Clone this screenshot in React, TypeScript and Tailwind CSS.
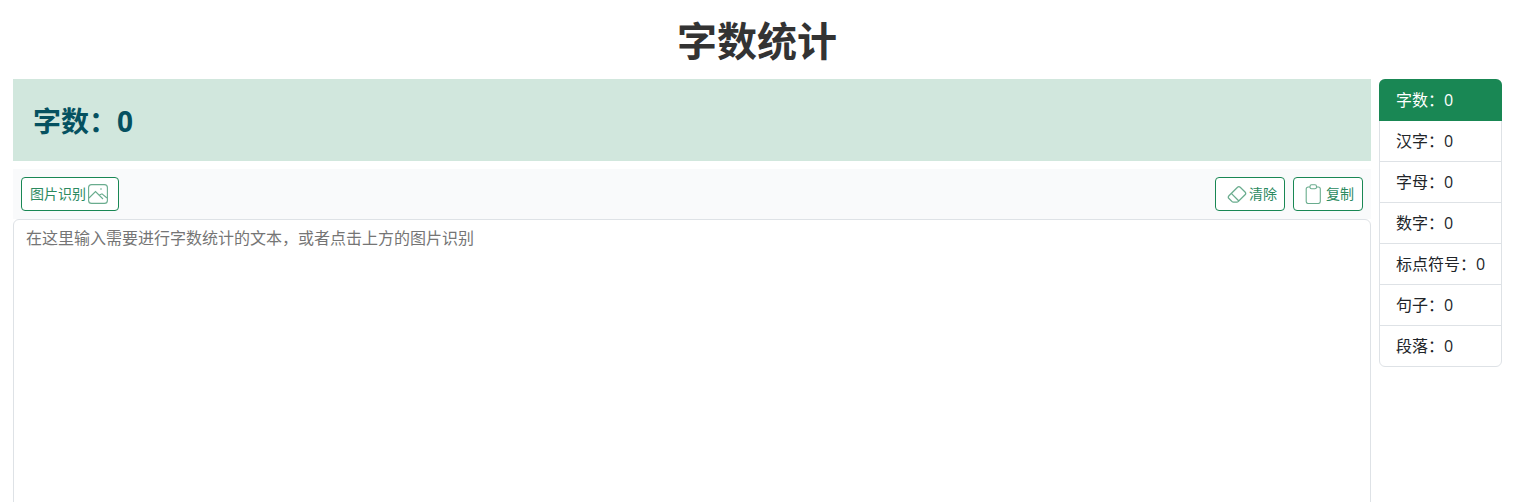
import React from "react";
import { BsEraser } from "react-icons/bs";

const stats = [
  ["字数", "0"],
  ["汉字", "0"],
  ["字母", "0"],
  ["数字", "0"],
  ["标点符号", "0"],
  ["句子", "0"],
  ["段落", "0"],
];

const btn =
  "flex items-center h-[34px] border border-[#198754] rounded-[4px] bg-white text-[#2b8a5f] text-[14px] leading-none";

function ImageIcon() {
  return (
    <svg viewBox="0 0 20 20" fill="none" stroke="currentColor" strokeWidth="1.1" className="w-[20px] h-[20px] opacity-70">
      <rect x="0.6" y="0.6" width="18.8" height="18.8" rx="3" />
      <path d="M1 14 L7.5 7.5 L15 15 M11.5 11 L14 9.8 L19 14" />
      <circle cx="13" cy="5" r="0.8" fill="currentColor" stroke="none" />
    </svg>
  );
}

function ClipIcon() {
  return (
    <svg viewBox="0 0 17 20" fill="none" stroke="currentColor" strokeWidth="1.1" className="w-[17px] h-[20px] opacity-70">
      <path d="M5 3 H3.2 A2 2 0 0 0 1.2 5 V17.5 A2 2 0 0 0 3.2 19.5 H13.3 A2 2 0 0 0 15.3 17.5 V5 A2 2 0 0 0 13.3 3 H11.5" />
      <rect x="5" y="0.8" width="6.5" height="4" rx="1.6" />
    </svg>
  );
}

export default function App() {
  return (
    <div className="h-[502px] overflow-hidden bg-white font-['Open_Sans','Noto_Sans_CJK_SC',sans-serif] text-[#212529]">
      <h1 className="h-[79px] pt-[13px] pr-1 text-center text-[40px] leading-[56px] font-bold text-[#333]">字数统计</h1>
      <div className="flex gap-2 pl-[13px] pr-4">
        <div className="flex-1 min-w-0">
          <div className="h-[82px] flex items-center pl-5 pt-[2px] bg-[#d1e7dd] text-[#055160] text-[28px] font-bold leading-none">
            字数：0
          </div>
          <div className="mt-2 h-[50px] flex items-center justify-between px-2 bg-[#f9fafb]">
            <button className={`${btn} w-[98px] pl-2 gap-[2px]`}>
              图片识别
              <ImageIcon />
            </button>
            <div className="flex gap-2">
              <button className={`${btn} w-[70px] pl-[11px] gap-[2px]`}>
                <BsEraser className="w-[20px] h-[20px] opacity-70" />
                清除
              </button>
              <button className={`${btn} w-[70px] pl-[11px] gap-[4px]`}>
                <ClipIcon />
                复制
              </button>
            </div>
          </div>
          <textarea
            readOnly
            placeholder="在这里输入需要进行字数统计的文本，或者点击上方的图片识别"
            className="block w-full h-[400px] px-3 py-[6px] border border-[#dee2e6] rounded-[6px] text-[16px] leading-[24px] placeholder:text-[#757575] outline-none resize-none"
          />
        </div>
        <ul className="w-[123px] h-[288px] border border-[#dee2e6] rounded-[6px] text-[16px]">
          {stats.map(([k, v], i) => (
            <li
              key={k}
              className={
                i === 0
                  ? "h-[42px] -mx-px -mt-px pl-[17px] flex items-center rounded-t-[6px] bg-[#198754] text-white"
                  : "h-[41px] pl-4 flex items-center border-b border-[#dee2e6] last:border-b-0 last:pb-[1px]"
              }
            >
              {k}：{v}
            </li>
          ))}
        </ul>
      </div>
    </div>
  );
}
